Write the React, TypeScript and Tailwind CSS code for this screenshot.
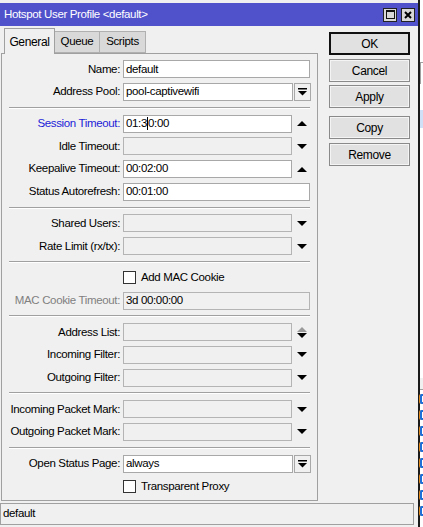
import React from "react";

type Tone = "normal" | "blue" | "gray";

const labelTone: Record<Tone, string> = {
  normal: "text-black",
  blue: "text-[#1c1cd8]",
  gray: "text-[#808080]",
};

function UpArrow({ color = "#000" }: { color?: string }) {
  return (
    <svg width="10" height="5" viewBox="0 0 10 5">
      <polygon points="0,5 10,5 5,0" fill={color} />
    </svg>
  );
}

function DownArrow({ color = "#000" }: { color?: string }) {
  return (
    <svg width="10" height="5" viewBox="0 0 10 5">
      <polygon points="0,0 10,0 5,5" fill={color} />
    </svg>
  );
}

function ComboIcon() {
  return (
    <svg width="9" height="8" viewBox="0 0 9 8">
      <rect x="0" y="0" width="9" height="1.5" fill="#000" />
      <polygon points="0,3 9,3 4.5,7.5" fill="#000" />
    </svg>
  );
}

function Row({ label, tone = "normal", children }: { label?: string; tone?: Tone; children: React.ReactNode }) {
  return (
    <div className="flex h-[22.7px] items-center">
      <div className={`w-[121px] shrink-0 whitespace-nowrap pr-[3px] text-right ${labelTone[tone]}`}>{label}</div>
      {children}
    </div>
  );
}

function Field({ value, disabled, width }: { value?: React.ReactNode; disabled?: boolean; width: string }) {
  return (
    <div
      className={`${width} flex h-[18px] items-center overflow-hidden whitespace-nowrap border pl-[2px] ${
        disabled ? "border-[#b4b4b4] bg-[#f0f0f0]" : "border-[#a8a8a8] bg-white"
      }`}
    >
      {value}
    </div>
  );
}

// input + small arrow at the right
function ArrowField({ value, disabled, arrow }: { value?: React.ReactNode; disabled?: boolean; arrow: "up" | "down" | "both" }) {
  return (
    <>
      <Field value={value} disabled={disabled} width="w-[169px]" />
      <div className="flex w-[19px] flex-col items-center justify-center gap-[1px]">
        {arrow === "up" && <UpArrow />}
        {arrow === "down" && <DownArrow />}
        {arrow === "both" && (
          <>
            <UpArrow color="#9a9a9a" />
            <DownArrow />
          </>
        )}
      </div>
    </>
  );
}

function ComboField({ value }: { value: string }) {
  return (
    <>
      <Field value={value} width="w-[170px]" />
      <div className="ml-[1px] flex h-[18px] w-[17px] items-center justify-center border border-[#a8a8a8] bg-[#f0f0f0]">
        <ComboIcon />
      </div>
    </>
  );
}

function Check({ label }: { label: string }) {
  return (
    <div className="flex h-[22.7px] items-center">
      <div className="w-[121px] shrink-0" />
      <div className="h-[13px] w-[13px] border border-[#333] bg-white" />
      <span className="ml-[5px]">{label}</span>
    </div>
  );
}

function Sep() {
  return (
    <div className="flex h-[9px] items-center px-[7px]">
      <div className="h-[2px] w-full border-t border-b border-[#a0a0a0] border-b-white" />
    </div>
  );
}

function Btn({ children, primary }: { children: string; primary?: boolean }) {
  return (
    <div
      className={`flex h-[23px] w-[81px] items-center justify-center bg-[#e1e1e1] text-[12px] ${
        primary ? "border-2 border-[#111]" : "border border-[#8a8a8a] shadow-[inset_0_0_0_1px_#f4f4f4]"
      }`}
    >
      {children}
    </div>
  );
}

export default function App() {
  return (
    <div className="flex h-[527px] w-[423px] overflow-hidden bg-[#f0f0f0] font-['Liberation_Sans',Arial,sans-serif] text-[11.5px] tracking-[-0.35px] text-black">
      {/* dialog window */}
      <div className="flex w-[418px] shrink-0 flex-col pt-[3px]">
        {/* title bar */}
        <div className="flex h-[23px] items-center bg-[#5052cc] pl-[4px] pr-[3px] text-white">
          <span>Hotspot User Profile &lt;default&gt;</span>
          <div className="ml-auto flex gap-[4px]">
            <div className="flex h-[14px] w-[14px] items-center justify-center border border-[#222] bg-[#d8d8d8]">
              <div className="h-[9px] w-[9px] border border-t-2 border-[#111]" />
            </div>
            <div className="flex h-[14px] w-[14px] items-center justify-center border border-[#222] bg-[#d8d8d8]">
              <svg width="8" height="8" viewBox="0 0 8 8">
                <path d="M1 1L7 7M7 1L1 7" stroke="#000" strokeWidth="2" />
              </svg>
            </div>
          </div>
        </div>

        <div className="flex">
          {/* left: tabs + panel */}
          <div className="flex w-[318px] flex-col pl-[1px]">
            <div className="flex h-[27px] items-end pl-[3px]">
              <div className="relative top-[1px] flex h-[26px] w-[51px] items-center justify-center border border-b-0 border-[#a0a0a0] bg-[#f0f0f0] text-[12px]">
                General
              </div>
              <div className="flex h-[22px] w-[45px] items-center justify-center border border-l-0 border-[#b0b0b0] bg-[#d9d9d9]">
                Queue
              </div>
              <div className="flex h-[22px] w-[46px] items-center justify-center border border-l-0 border-[#b0b0b0] bg-[#d9d9d9]">
                Scripts
              </div>
            </div>
            <div className="h-[448px] border border-[#a0a0a0] pt-[4px]">
              <Row label="Name:">
                <Field value="default" width="w-[187px]" />
              </Row>
              <Row label="Address Pool:">
                <ComboField value="pool-captivewifi" />
              </Row>
              <Sep />
              <Row label="Session Timeout:" tone="blue">
                <ArrowField
                  arrow="up"
                  value={
                    <>
                      01:3
                      <span className="inline-block h-[13px] w-[1px] bg-black" />
                      0:00
                    </>
                  }
                />
              </Row>
              <Row label="Idle Timeout:">
                <ArrowField arrow="down" disabled />
              </Row>
              <Row label="Keepalive Timeout:">
                <ArrowField arrow="up" value="00:02:00" />
              </Row>
              <Row label="Status Autorefresh:">
                <Field value="00:01:00" width="w-[187px]" />
              </Row>
              <Sep />
              <Row label="Shared Users:">
                <ArrowField arrow="down" disabled />
              </Row>
              <Row label="Rate Limit (rx/tx):">
                <ArrowField arrow="down" disabled />
              </Row>
              <Sep />
              <Check label="Add MAC Cookie" />
              <Row label="MAC Cookie Timeout:" tone="gray">
                <Field value="3d 00:00:00" disabled width="w-[187px]" />
              </Row>
              <Sep />
              <Row label="Address List:">
                <ArrowField arrow="both" disabled />
              </Row>
              <Row label="Incoming Filter:">
                <ArrowField arrow="down" disabled />
              </Row>
              <Row label="Outgoing Filter:">
                <ArrowField arrow="down" disabled />
              </Row>
              <Sep />
              <Row label="Incoming Packet Mark:">
                <ArrowField arrow="down" disabled />
              </Row>
              <Row label="Outgoing Packet Mark:">
                <ArrowField arrow="down" disabled />
              </Row>
              <Sep />
              <Row label="Open Status Page:">
                <ComboField value="always" />
              </Row>
              <Check label="Transparent Proxy" />
            </div>
          </div>

          {/* right: buttons */}
          <div className="ml-[11px] mt-[6px] flex flex-col">
            <Btn primary>OK</Btn>
            <div className="mt-[4px]">
              <Btn>Cancel</Btn>
            </div>
            <div className="mt-[3px]">
              <Btn>Apply</Btn>
            </div>
            <div className="mt-[8px]">
              <Btn>Copy</Btn>
            </div>
            <div className="mt-[4px]">
              <Btn>Remove</Btn>
            </div>
          </div>
        </div>

        {/* status bar */}
        <div className="mt-[2px] flex h-[22px] w-[414px] items-center border border-[#a0a0a0] pl-[2px]">default</div>
      </div>

      {/* edge of the window behind */}
      <div className="flex w-[5px] shrink-0 flex-col border-l-2 border-[#1a1a1a] bg-white">
        <div className="mt-[62px] h-[22px] border-l border-t border-[#a0a0a0]" />
        <div className="mt-[26px] h-[18px] bg-[#cfe0f7]" />
        <div className="mt-[250px] h-[12px] border-b border-[#a0a0a0] bg-[#f0f0f0]" />
        <div className="flex flex-col gap-[6px] pt-[4px]">
          {[0, 1, 2, 3, 4, 5, 6, 7].map((i) => (
            <div key={i} className="h-[10px] w-[3px] rounded-l-[2px] border-y-2 border-l-2 border-[#1f6fd6] shadow-[-1px_0_0_#e08a1e]" />
          ))}
        </div>
      </div>
    </div>
  );
}
